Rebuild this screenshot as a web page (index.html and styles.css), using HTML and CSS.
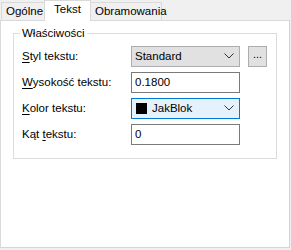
FILE: index.html
```html
<!DOCTYPE html>
<html>
<head>
    <title>Właściwości tekstu</title>
    <link rel="stylesheet" href="styles.css">
</head>
<body>
    <div class="tabs">
        <div class="tab tab-first">Ogólne</div>
        <div class="tab tab-active">Tekst</div>
        <div class="tab tab-last">Obramowania</div>
    </div>

    <div class="panel">
        <fieldset class="group">
            <legend>Właściwości</legend>

            <div class="row">
                <label for="styleSelect"><u>S</u>tyl tekstu:</label>
                <div class="combo" id="styleSelect">
                    <span class="combo-text">Standard</span>
                    <svg class="chevron" width="10" height="6" viewBox="0 0 10 6"><polyline points="0.5,0.5 5,5 9.5,0.5" fill="none" stroke="#333" stroke-width="1"/></svg>
                </div>
                <div class="dots-btn">...</div>
            </div>

            <div class="row">
                <label for="heightInput"><u>W</u>ysokość tekstu:</label>
                <div class="field" id="heightInput">0.1800</div>
            </div>

            <div class="row">
                <label for="colorSelect"><u>K</u>olor tekstu:</label>
                <div class="combo combo-focus" id="colorSelect">
                    <span class="swatch"></span>
                    <span class="combo-text">JakBlok</span>
                    <svg class="chevron" width="10" height="6" viewBox="0 0 10 6"><polyline points="0.5,0.5 5,5 9.5,0.5" fill="none" stroke="#333" stroke-width="1"/></svg>
                </div>
            </div>

            <div class="row">
                <label for="angleInput">Kąt <u>t</u>ekstu:</label>
                <div class="field" id="angleInput">0</div>
            </div>
        </fieldset>
    </div>
</body>
</html>
```

FILE: styles.css
```css
body {
    margin: 0;
    background-color: #f0f0f0;
    font-family: "Liberation Sans", Arial, sans-serif;
    font-size: 11.5px;
    color: #000;
    width: 291px;
    height: 250px;
    overflow: hidden;
}

u {
    text-decoration-thickness: 1px;
    text-underline-offset: 2px;
}

/* Tab strip */
.tabs {
    display: flex;
    align-items: flex-end;
    height: 20px;
    padding-left: 1px;
}

.tab {
    box-sizing: border-box;
    height: 18px;
    line-height: 16px;
    border: 1px solid #d9d9d9;
    border-bottom: none;
    background-color: #f0f0f0;
    padding-left: 4px;
    white-space: nowrap;
}

.tab-first {
    width: 44px;
}

.tab-active {
    position: relative;
    z-index: 1;
    width: 47px;
    height: 21px;
    margin: 0 -1px -1px -1px;
    padding-left: 9px;
    line-height: 17px;
    background-color: #fff;
}

.tab-last {
    width: 72px;
    padding-left: 4px;
}

/* Panel */
.panel {
    box-sizing: border-box;
    width: 290px;
    height: 228px;
    background-color: #fff;
    border: 1px solid #d9d9d9;
    border-right-color: #d4d4d4;
    border-bottom-color: #d4d4d4;
    padding: 6px 0 0 12px;
}

.group {
    box-sizing: border-box;
    width: 264px;
    height: 132px;
    margin: 0;
    padding: 3px 8px 0 8px;
    border: 1px solid #dcdcdc;
}

.group legend {
    padding: 0 2px;
    margin-left: -2px;
    line-height: 13px;
}

.row {
    display: flex;
    align-items: center;
    height: 26px;
}

.row label {
    width: 109px;
    flex: none;
}

.combo,
.field {
    box-sizing: border-box;
    width: 109px;
    height: 21px;
    display: flex;
    align-items: center;
    padding-left: 3px;
}

.combo {
    background-color: #e1e1e1;
    border: 1px solid #adadad;
}

.combo-focus {
    background-color: #e5f1fb;
    border-color: #0078d7;
}

.combo-text {
    flex: 1;
}

.chevron {
    margin-right: 5px;
}

.swatch {
    width: 11px;
    height: 11px;
    background-color: #000;
    margin: 0 5px 0 1px;
}

.field {
    background-color: #fff;
    border: 1px solid #7a7a7a;
}

.dots-btn {
    box-sizing: border-box;
    width: 19px;
    height: 21px;
    margin-left: 8px;
    background-color: #e1e1e1;
    border: 1px solid #adadad;
    text-align: center;
    line-height: 14px;
    font-size: 11px;
}
```
